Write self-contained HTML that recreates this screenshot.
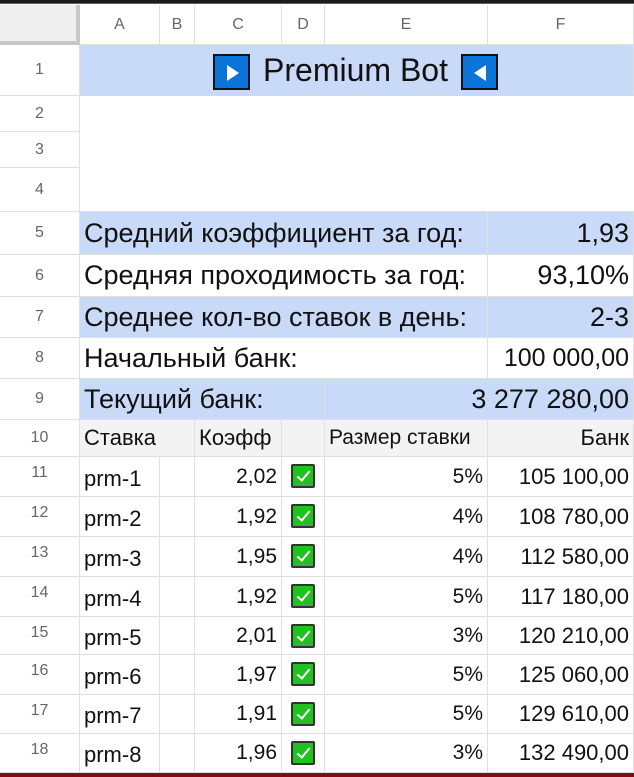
<!DOCTYPE html>
<html><head><meta charset="utf-8"><style>
*{margin:0;padding:0;box-sizing:border-box}
body{width:634px;height:777px;overflow:hidden;background:#fff;position:relative;font-family:"Liberation Sans",Arial,sans-serif;color:#111}
.c{position:absolute;display:flex;align-items:center;white-space:nowrap;border-right:1px solid #e0e0e0;border-bottom:1px solid #e0e0e0}
.h{justify-content:center;color:#666;font-size:16px;background:#fff}
.r{justify-content:flex-end;padding-right:4px}
.l{padding-left:4px}
.b{background:#c9daf8}
.big{font-size:27px}
.sm{font-size:22px}
.n{font-size:21px}
.cb{width:24px;height:24px;background:#1fc21f;border:2px solid #333;border-radius:2px;position:absolute;left:291px}
.cb:after{content:"";position:absolute;left:7px;top:2px;width:5px;height:11px;border:solid #fff;border-width:0 2px 2px 0;transform:rotate(40deg)}
.ic{position:absolute;top:54px;width:37px;height:36px;background:#0b74d9;border:2px solid #111}
</style></head><body>
<div style="position:absolute;left:0;top:0;width:634px;height:4px;background:#1b1b1b;border-bottom:1px solid #c33"></div>
<div style="position:absolute;left:0;top:773px;width:634px;height:4px;background:#7a1010"></div>
<div class="c" style="left:0;top:5px;width:80px;height:40px;background:#efefef;border-right:4px solid #c8c8c8;border-bottom:4px solid #c8c8c8"></div>
<div class="c h" style="left:80px;top:5px;width:80px;height:40px">A</div>
<div class="c h" style="left:160px;top:5px;width:35px;height:40px">B</div>
<div class="c h" style="left:195px;top:5px;width:87px;height:40px">C</div>
<div class="c h" style="left:282px;top:5px;width:43px;height:40px">D</div>
<div class="c h" style="left:325px;top:5px;width:163px;height:40px">E</div>
<div class="c h" style="left:488px;top:5px;width:146px;height:40px">F</div>
<div class="c h" style="left:0;top:45px;width:80px;height:51px">1</div>
<div class="c h" style="left:0;top:96px;width:80px;height:36px">2</div>
<div class="c h" style="left:0;top:132px;width:80px;height:36px">3</div>
<div class="c h" style="left:0;top:168px;width:80px;height:44px">4</div>
<div class="c h" style="left:0;top:212px;width:80px;height:43px">5</div>
<div class="c h" style="left:0;top:255px;width:80px;height:42px">6</div>
<div class="c h" style="left:0;top:297px;width:80px;height:41px">7</div>
<div class="c h" style="left:0;top:338px;width:80px;height:41px">8</div>
<div class="c h" style="left:0;top:379px;width:80px;height:41px">9</div>
<div class="c h" style="left:0;top:420px;width:80px;height:37px">10</div>
<div class="c h" style="left:0;top:457px;width:80px;height:40px;align-items:flex-start;padding-top:7px">11</div>
<div class="c h" style="left:0;top:497px;width:80px;height:40px;align-items:flex-start;padding-top:7px">12</div>
<div class="c h" style="left:0;top:537px;width:80px;height:40px;align-items:flex-start;padding-top:7px">13</div>
<div class="c h" style="left:0;top:577px;width:80px;height:40px;align-items:flex-start;padding-top:7px">14</div>
<div class="c h" style="left:0;top:617px;width:80px;height:38px;align-items:flex-start;padding-top:7px">15</div>
<div class="c h" style="left:0;top:655px;width:80px;height:40px;align-items:flex-start;padding-top:7px">16</div>
<div class="c h" style="left:0;top:695px;width:80px;height:39px;align-items:flex-start;padding-top:7px">17</div>
<div class="c h" style="left:0;top:734px;width:80px;height:39px;align-items:flex-start;padding-top:7px">18</div>
<div class="c b" style="left:80px;top:45px;width:554px;height:51px;justify-content:center;font-size:32px;border-bottom:1px solid #d0d8e8"><span style="position:relative;left:-1px">Premium Bot</span></div>
<div class="ic" style="left:213px"><div style="position:absolute;left:12px;top:9px;border-left:12px solid #fff;border-top:8px solid transparent;border-bottom:8px solid transparent"></div></div>
<div class="ic" style="left:461px"><div style="position:absolute;left:11px;top:9px;border-right:12px solid #fff;border-top:8px solid transparent;border-bottom:8px solid transparent"></div></div>
<div class="c" style="left:80px;top:96px;width:554px;height:116px;border-right:none"></div>
<div class="c b l big" style="left:80px;top:212px;width:408px;height:43px">Средний коэффициент за год:</div>
<div class="c b r big" style="left:488px;top:212px;width:146px;height:43px">1,93</div>
<div class="c l big" style="left:80px;top:255px;width:408px;height:42px">Средняя проходимость за год:</div>
<div class="c r big" style="left:488px;top:255px;width:146px;height:42px">93,10%</div>
<div class="c b l big" style="left:80px;top:297px;width:408px;height:41px">Среднее кол-во ставок в день:</div>
<div class="c b r big" style="left:488px;top:297px;width:146px;height:41px">2-3</div>
<div class="c l big" style="left:80px;top:338px;width:408px;height:41px">Начальный банк:</div>
<div class="c r big" style="left:488px;top:338px;width:146px;height:41px;font-size:25px">100 000,00</div>
<div class="c b l big" style="left:80px;top:379px;width:245px;height:41px">Текущий банк:</div>
<div class="c b r big" style="left:325px;top:379px;width:309px;height:41px">3 277 280,00</div>
<div class="c l sm" style="left:80px;top:420px;width:115px;height:37px;background:#f3f3f3">Ставка</div>
<div class="c l sm" style="left:195px;top:420px;width:87px;height:37px;background:#f3f3f3">Коэфф</div>
<div class="c" style="left:282px;top:420px;width:43px;height:37px;background:#f3f3f3"></div>
<div class="c l sm" style="left:325px;top:420px;width:163px;height:37px;background:#f3f3f3;font-size:21px">Размер ставки</div>
<div class="c r sm" style="left:488px;top:420px;width:146px;height:37px;background:#f3f3f3">Банк</div>
<div id="d"></div>
<script>
var rows=[[457,40,"prm-1","2,02","5%","105 100,00"],[497,40,"prm-2","1,92","4%","108 780,00"],[537,40,"prm-3","1,95","4%","112 580,00"],[577,40,"prm-4","1,92","5%","117 180,00"],[617,38,"prm-5","2,01","3%","120 210,00"],[655,40,"prm-6","1,97","5%","125 060,00"],[695,39,"prm-7","1,91","5%","129 610,00"],[734,39,"prm-8","1,96","3%","132 490,00"]];
var h="";rows.forEach(function(r){var t=r[0],ht=r[1];
h+='<div class="c l sm" style="left:80px;top:'+t+'px;width:80px;height:'+ht+'px;padding-top:4px">'+r[2]+'</div>';
h+='<div class="c" style="left:160px;top:'+t+'px;width:35px;height:'+ht+'px"></div>';
h+='<div class="c r n" style="left:195px;top:'+t+'px;width:87px;height:'+ht+'px">'+r[3]+'</div>';
h+='<div class="c" style="left:282px;top:'+t+'px;width:43px;height:'+ht+'px"></div>';
h+='<div class="cb" style="top:'+(t+7)+'px"></div>';
h+='<div class="c r n" style="left:325px;top:'+t+'px;width:163px;height:'+ht+'px">'+r[4]+'</div>';
h+='<div class="c r n" style="left:488px;top:'+t+'px;width:146px;height:'+ht+'px;font-size:22px">'+r[5]+'</div>';});
document.getElementById("d").outerHTML=h;
</script>
</body></html>
